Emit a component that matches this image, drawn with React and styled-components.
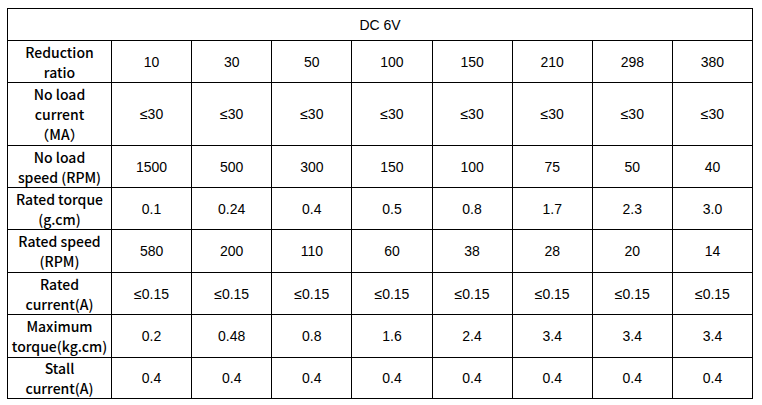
import React from "react";
import styled, { createGlobalStyle } from "styled-components";

const GlobalStyle = createGlobalStyle`
  html, body {
    margin: 0;
    padding: 0;
    background: #fff;
  }
`;

const Page = styled.div`
  padding: 8px 0 0 7px;
`;

const Table = styled.table`
  width: 746px;
  border-collapse: collapse;
  table-layout: fixed;
  color: #000;
  font-family: "Liberation Sans", Arial, sans-serif;
  font-size: 14px;
  text-align: center;
`;

const Row = styled.tr`
  height: ${p => p.$h}px;
`;

const Title = styled.th`
  border: 1px solid #000;
  font-weight: 400;
  padding: 0;
`;

const Label = styled.td`
  width: 104px;
  border: 1px solid #000;
  padding: 0;
  font-family: "Noto Sans CJK SC", "Liberation Sans", sans-serif;
  font-weight: 500;
  line-height: 20px;
`;

const Cell = styled.td`
  border: 1px solid #000;
  padding: 0;
`;

const ratios = ["10", "30", "50", "100", "150", "210", "298", "380"];

const rows = [
  { label: ["No load", "current", "（MA）"], h: 63, values: Array(8).fill("≤30") },
  { label: ["No load", "speed (RPM)"], h: 42, values: ["1500", "500", "300", "150", "100", "75", "50", "40"] },
  { label: ["Rated torque", "(g.cm)"], h: 42, values: ["0.1", "0.24", "0.4", "0.5", "0.8", "1.7", "2.3", "3.0"] },
  { label: ["Rated speed", "(RPM)"], h: 43, values: ["580", "200", "110", "60", "38", "28", "20", "14"] },
  { label: ["Rated", "current(A)"], h: 42, values: Array(8).fill("≤0.15") },
  { label: ["Maximum", "torque(kg.cm)"], h: 43, values: ["0.2", "0.48", "0.8", "1.6", "2.4", "3.4", "3.4", "3.4"] },
  { label: ["Stall", "current(A)"], h: 41, values: Array(8).fill("0.4") }
];

function LabelText({ lines }) {
  return lines.map((line, i) => (
    <React.Fragment key={i}>
      {i > 0 && <br />}
      {line}
    </React.Fragment>
  ));
}

export default function App() {
  return (
    <Page>
      <GlobalStyle />
      <Table>
        <colgroup>
          <col style={{ width: 104 }} />
          {ratios.map(r => (
            <col key={r} />
          ))}
        </colgroup>
        <thead>
          <Row $h={32}>
            <Title colSpan={9}>DC 6V</Title>
          </Row>
        </thead>
        <tbody>
          <Row $h={42}>
            <Label>
              <LabelText lines={["Reduction", "ratio"]} />
            </Label>
            {ratios.map(r => (
              <Cell key={r}>{r}</Cell>
            ))}
          </Row>
          {rows.map(row => (
            <Row key={row.label.join(" ")} $h={row.h}>
              <Label>
                <LabelText lines={row.label} />
              </Label>
              {row.values.map((v, i) => (
                <Cell key={i}>{v}</Cell>
              ))}
            </Row>
          ))}
        </tbody>
      </Table>
    </Page>
  );
}
